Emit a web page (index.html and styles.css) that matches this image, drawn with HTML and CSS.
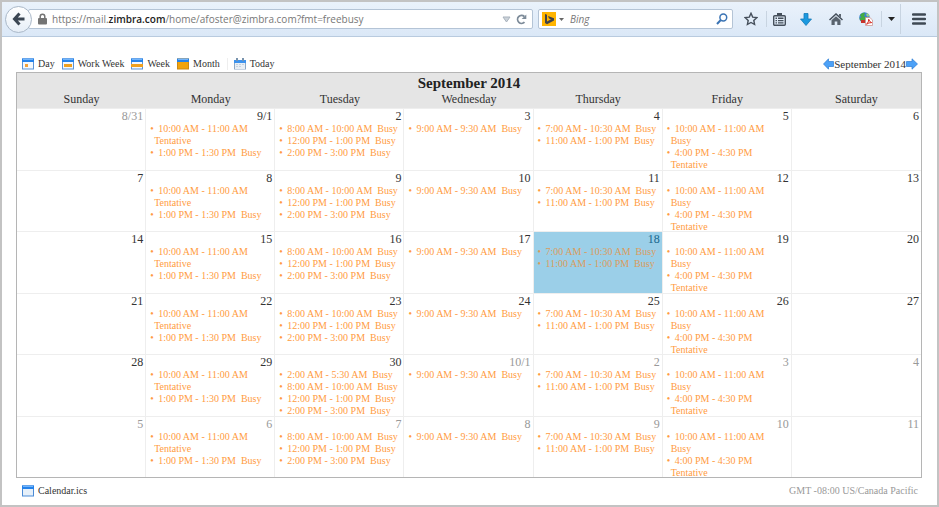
FILE: index.html
```html
<!DOCTYPE html>
<html lang="en">

<head>
    <meta charset="UTF-8">
    <meta name="viewport" content="width=device-width, initial-scale=1.0">
    <title>Calendar - September 2014</title>
    <link rel="stylesheet" href="styles.css">
</head>

<body>
    <header class="browser-bar">
        <button class="back" aria-label="Back">
            <svg width="14" height="14" viewBox="0 0 14 14"><path d="M7.5 1.5 2.5 7l5 5.500M3 7h9.500" fill="none" stroke="#3b4653" stroke-width="3"/></svg>
        </button>
        <div class="url-field">
            <svg width="9" height="12" viewBox="0 0 9 12"><path d="M2.200 6V3.500a2.300 2.300 0 0 1 4.600 0V6" fill="none" stroke="#747474" stroke-width="1.500"/><rect y="5" width="9" height="6.500" rx="1" fill="#747474"/></svg>
            <a class="url" href="#">https://mail.<b>zimbra.com</b>/home/afoster@zimbra.com?fmt=freebusy</a>
            <svg width="9" height="7" viewBox="0 0 9 7"><path d="M1 1h7L4.500 6z" fill="#ccd3da" stroke="#a9b3bd"/></svg>
            <button class="icon-button" aria-label="Reload">
                <svg width="11" height="11" viewBox="0 0 11 11"><path d="M8.500 8.200A4 4 0 1 1 8.300 2.500" fill="none" stroke="#7d8b99" stroke-width="1.800"/><path d="M10.300.500v4.600H5.700z" fill="#7d8b99"/></svg>
            </button>
        </div>
        <form class="search-field">
            <svg width="14" height="14" viewBox="0 0 14 14"><path d="M0 0h14v14H0z" fill="#ffb400"/><path d="M3 2l2 .800v6.700l4-2.200-2-.900-1-2.400 6 2.200v2.200l-7 3.900-2-1.200z" fill="#40434a"/></svg>
            <svg class="caret" width="5" height="3" viewBox="0 0 5 3"><path d="M0 0h5L2.500 3z" fill="#666"/></svg>
            <input type="text" placeholder="Bing" aria-label="Search">
            <button class="icon-button" type="button" aria-label="Go">
                <svg width="12" height="12" viewBox="0 0 12 12"><circle cx="7.300" cy="4.500" r="3.400" fill="none" stroke="#3b74b4" stroke-width="1.500"/><path d="M4.800 7 1 11" stroke="#3b74b4" stroke-width="2"/></svg>
            </button>
        </form>
        <nav class="tools">
            <button class="icon-button" aria-label="Bookmark">
                <svg width="14" height="14" viewBox="0 0 14 14"><path d="M7 1.300l1.700 3.800 4.100.500-3 2.800.800 4.100L7 10.500l-3.600 2 .800-4.100-3-2.800 4.100-.500z" fill="none" stroke="#454f5b" stroke-width="1.400"/></svg>
            </button>
            <span class="divider"></span>
            <button class="icon-button narrow" aria-label="Bookmarks list">
                <svg width="13" height="13" viewBox="0 0 13 13"><rect x=".700" y="2.700" width="11.600" height="9.600" rx="1" fill="none" stroke="#454f5b" stroke-width="1.400"/><path d="M4 0h5v3H4zM2.500 4.500H4V6H2.500zM5 4.500h5.500V6H5zM2.500 7H4v1.200H2.500zM5 7h5.500v1.200H5zM2.500 9.300H4v1.200H2.500zM5 9.300h5.500v1.200H5z" fill="#454f5b"/></svg>
            </button>
            <button class="icon-button" aria-label="Downloads">
                <svg width="12" height="13" viewBox="0 0 12 13"><path d="M4 .500h4V6h3.500L6 12.500.500 6H4z" fill="#1c99df" stroke="#147ab9" stroke-width=".800"/></svg>
            </button>
            <button class="icon-button" aria-label="Home">
                <svg width="14" height="13" viewBox="0 0 14 13"><path d="M.500 7 7 1l6.500 6" fill="none" stroke="#454f5b" stroke-width="1.500"/><path d="M2.500 7.200 7 3.200l4.500 4V12H8.300V8.500H5.700V12H2.500zM10 1h2v3.500l-2-1.800z" fill="#59636e"/></svg>
            </button>
            <button class="icon-button" aria-label="Convert to PDF">
                <svg width="14" height="14" viewBox="0 0 14 14"><circle cx="5.500" cy="5.500" r="5.300" fill="#3d83cf"/><path d="M1 3q3-3 5-2L5 4l3 2-3 4Q1 10 .500 6l2-.500z" fill="#45ac42"/><path d="M8 1l2.500 2L9 5 7 3z" fill="#9bd184"/><path d="M6.500 5.500h4.300L13.500 8v5.500h-7z" fill="#fff" stroke="#c88b86" stroke-width=".700"/><path d="M2 8h4v3H2z" fill="#c7332a"/><path d="M7.500 12.300Q10 10 9.700 7.200q.800 3 3 3.400-3-.100-5.200 1.700z" fill="none" stroke="#d92a22"/></svg>
            </button>
            <span class="divider"></span>
            <button class="icon-button more" aria-label="More">
                <svg width="7" height="4" viewBox="0 0 7 4"><path d="M0 0h7L3.500 4z" fill="#222"/></svg>
            </button>
            <span class="divider tall"></span>
            <button class="icon-button menu" aria-label="Menu">
                <svg width="14" height="12" viewBox="0 0 14 12"><path d="M1 1.500h12M1 6h12M1 10.500h12" stroke="#3f4954" stroke-width="2.400" stroke-linecap="round"/></svg>
            </button>
        </nav>
    </header>

    <main>
        <div class="view-bar">
            <a href="#day">
                <svg width="12" height="12" viewBox="0 0 12 12"><path d="M0 .500h12v11H0z" fill="#5b94d8"/><path d="M1 4h10v6.500H1z" fill="#f3f8fd"/><path d="M0 .500h12V4H0z" fill="#2482ea"/><path d="M1 1h10v1H1z" fill="#73b5fb"/><path d="M3 6h3v3H3z" fill="#f0a13a"/></svg>
                Day
            </a>
            <a href="#workweek">
                <svg width="12" height="12" viewBox="0 0 12 12"><path d="M0 .500h12v11H0z" fill="#5b94d8"/><path d="M1 4h10v6.500H1z" fill="#f3f8fd"/><path d="M0 .500h12V4H0z" fill="#2482ea"/><path d="M1 1h10v1H1z" fill="#73b5fb"/><path d="M2 6h8v3H2z" fill="#eea020"/></svg>
                Work Week
            </a>
            <a href="#week">
                <svg width="12" height="12" viewBox="0 0 12 12"><path d="M0 .500h12v11H0z" fill="#5b94d8"/><path d="M1 4h10v6.500H1z" fill="#f3f8fd"/><path d="M0 .500h12V4H0z" fill="#2482ea"/><path d="M1 1h10v1H1z" fill="#73b5fb"/><path d="M0 6h12v3H0z" fill="#eea020"/></svg>
                Week
            </a>
            <a href="#month">
                <svg width="12" height="12" viewBox="0 0 12 12"><path d="M0 .500h12v11H0z" fill="#cc8a12"/><path d="M1 4h10v6.500H1z" fill="#f0a30c"/><path d="M0 .500h12V4H0z" fill="#2482ea"/><path d="M1 1h10v1H1z" fill="#73b5fb"/></svg>
                Month
            </a>
            <a class="today-link" href="#today">
                <svg width="12" height="12" viewBox="0 0 12 12"><path d="M0 2h12v9.500H0z" fill="#8ea9c6"/><path d="M1 5h10v6H1z" fill="#e9eff5"/><path d="M0 2h12v3H0z" fill="#3d93ee"/><path d="M2 0h2v3H2zM8 0h2v3H8z" fill="#7893ad"/><path d="M2 6h2v1H2zM5 6h2v1H5zM8 6h2v1H8zM2 8h2v1H2zM5 8h2v1H5z" fill="#c5d2df"/></svg>
                Today
            </a>
            <div class="month-nav">
                <a href="#prev" aria-label="Previous month"><svg width="11" height="12" viewBox="0 0 11 12"><path d="M.500 6 5.500.800v2.700h5v5h-5v2.700z" fill="#4ca1f7" stroke="#2c7bd3" stroke-width=".700"/></svg></a>
                <span>September 2014</span>
                <a href="#next" aria-label="Next month"><svg width="12" height="12" viewBox="0 0 12 12"><path d="M11.500 6 6 .800v2.700H.500v5H6v2.700z" fill="#4ca1f7" stroke="#2c7bd3" stroke-width=".700"/></svg></a>
            </div>
        </div>

        <table class="calendar">
            <caption>September 2014</caption>
            <thead>
                <tr>
                    <th>Sunday</th>
                    <th>Monday</th>
                    <th>Tuesday</th>
                    <th>Wednesday</th>
                    <th>Thursday</th>
                    <th>Friday</th>
                    <th>Saturday</th>
                </tr>
            </thead>
            <tbody id="weeks"></tbody>
        </table>

        <footer>
            <a href="#ics">
                <svg width="12" height="12" viewBox="0 0 12 12"><path d="M0 .500h12v11H0z" fill="#4b8bd6"/><path d="M1 4h10v6.500H1z" fill="#e6f0fa"/><path d="M0 .500h12V4H0z" fill="#2482ea"/><path d="M1 1h10v1H1z" fill="#73b5fb"/></svg>
                Calendar.ics
            </a>
            <span class="timezone">GMT -08:00 US/Canada Pacific</span>
        </footer>
    </main>

    <script>
        const weeks = [
            ['8/31', '9/1', '2', '3', '4', '5', '6'],
            ['7', '8', '9', '10', '11', '12', '13'],
            ['14', '15', '16', '17', '18', '19', '20'],
            ['21', '22', '23', '24', '25', '26', '27'],
            ['28', '29', '30', '10/1', '2', '3', '4'],
            ['5', '6', '7', '8', '9', '10', '11']
        ];

        // Same meetings every week, one list per weekday
        const meetings = [
            [],
            ['10:00 AM - 11:00 AM<br>Tentative', '1:00 PM - 1:30 PM&nbsp; Busy'],
            ['8:00 AM - 10:00 AM&nbsp; Busy', '12:00 PM - 1:00 PM&nbsp; Busy', '2:00 PM - 3:00 PM&nbsp; Busy'],
            ['9:00 AM - 9:30 AM&nbsp; Busy'],
            ['7:00 AM - 10:30 AM&nbsp; Busy', '11:00 AM - 1:00 PM&nbsp; Busy'],
            ['10:00 AM - 11:00 AM<br>Busy', '4:00 PM - 4:30 PM<br>Tentative'],
            []
        ];

        const body = document.getElementById('weeks');

        weeks.forEach((days, week) => {
            const row = body.insertRow();
            days.forEach((label, day) => {
                const cell = row.insertCell();
                const index = week * 7 + day;
                let items = meetings[day];

                // September 30 has one extra early meeting
                if (label === '30') items = ['2:00 AM - 5:30 AM&nbsp; Busy', ...items];
                if (index < 1 || index > 30) cell.classList.add('other-month');
                if (label === '18') cell.classList.add('today');

                cell.innerHTML = `<div class="date">${label}</div>`;
                if (items.length) {
                    cell.innerHTML += `<ul>${items.map(item => `<li>${item}</li>`).join('')}</ul>`;
                }
            });
        });
    </script>
</body>

</html>
```
FILE: styles.css
```css
* {
    box-sizing: border-box;
}

body {
    margin: 0;
    min-height: 100vh;
    border: 2px solid #c3c3c3;
    background: #fff;
    color: #333;
    font-family: "Liberation Serif", serif;
    font-size: 10px;
}

svg {
    display: block;
    flex: none;
}

a {
    color: inherit;
    text-decoration: none;
}

.browser-bar {
    display: flex;
    align-items: center;
    height: 35px;
    padding-left: 3px;
    border-bottom: 1px solid #b9cbdf;
    background: linear-gradient(#eaf2fb, #dbe8f7);
    font-family: "Open Sans", sans-serif;
}

.back {
    display: flex;
    align-items: center;
    justify-content: center;
    z-index: 1;
    width: 27px;
    height: 27px;
    padding: 0;
    border: 1px solid #aab8c8;
    border-radius: 50%;
    background: linear-gradient(#fff, #e6eef7);
}

.icon-button {
    padding: 0;
    border: none;
    background: none;
}

.url-field,
.search-field {
    display: flex;
    align-items: center;
    height: 20px;
    border: 1px solid #b4c4d6;
    border-radius: 2px;
    background: #fff;
}

.url-field {
    flex: 1;
    gap: 5px;
    margin-left: -4px;
    padding: 0 5px 0 9px;
}

.url {
    flex: 1;
    color: #777;
    font-size: 10px;
}

.url b {
    color: #222;
    font-weight: 600;
}

.search-field {
    width: 195px;
    margin: 0 0 0 5px;
    padding: 0 4px 0 3px;
}

.caret {
    margin: 0 6px 0 3px;
}

.search-field input {
    flex: 1;
    min-width: 0;
    padding: 0;
    border: none;
    outline: none;
    background: none;
    font-family: inherit;
    font-size: 10px;
}

.search-field input::placeholder {
    color: #777;
    font-style: italic;
}

.tools {
    display: flex;
    align-items: center;
    padding-left: 3px;
}

.tools .icon-button {
    display: flex;
    justify-content: center;
    width: 30px;
}

.tools .narrow {
    width: 24px;
}

.tools .more {
    width: 18px;
}

.tools .menu {
    width: 36px;
}

.divider {
    width: 1px;
    height: 16px;
    background: #c8d4e1;
}

.divider.tall {
    height: 30px;
}

main {
    padding: 18px 15px 0 14px;
}

.view-bar {
    display: flex;
    align-items: center;
    height: 17px;
    padding: 0 4px 0 6px;
    gap: 7px;
}

.view-bar > a,
footer a {
    display: flex;
    align-items: center;
    gap: 4px;
}

.today-link {
    padding-left: 6px;
    border-left: 1px solid #eee;
}

.month-nav {
    display: flex;
    align-items: center;
    margin-left: auto;
    font-size: 11px;
}

.calendar {
    width: 100%;
    border: 1px solid #b5b5b5;
    border-top: none;
    border-spacing: 0;
    table-layout: fixed;
}

.calendar caption {
    height: 20px;
    border: 1px solid #b5b5b5;
    border-bottom: none;
    background: #e5e5e5;
    color: #222;
    font-size: 15px;
    font-weight: bold;
    line-height: 20px;
}

.calendar th {
    height: 16px;
    padding: 0;
    background: #e5e5e5;
    font-size: 12px;
    font-weight: normal;
    line-height: 14px;
    vertical-align: top;
}

.calendar td {
    height: 61px;
    padding: 0 2px 0 4px;
    border-top: 1px solid #eee;
    border-right: 1px solid #eee;
    vertical-align: top;
}

.calendar tr:nth-child(odd) td {
    height: 62px;
}

.calendar td:last-child {
    border-right: none;
}

.date {
    font-size: 12px;
    line-height: 14px;
    text-align: right;
}

/* pulls the last line back so four lines fit in a row */
.calendar ul {
    margin: 0 0 -2px;
    padding: 0 0 0 4px;
    color: #ff9c42;
    line-height: 12px;
    list-style: none;
    white-space: nowrap;
}

.calendar li::before {
    content: "•";
    display: inline-block;
    width: 8px;
    margin-left: -4px;
}

.calendar .other-month .date {
    color: #999;
}

.calendar .today {
    background: #9bcfe8;
}

.today .date {
    color: #17678e;
}

.calendar .today ul {
    color: #dc9c5d;
}

footer {
    display: flex;
    align-items: center;
    justify-content: space-between;
    height: 25px;
    padding: 0 4px 0 6px;
}

.timezone {
    color: #999;
}
```
